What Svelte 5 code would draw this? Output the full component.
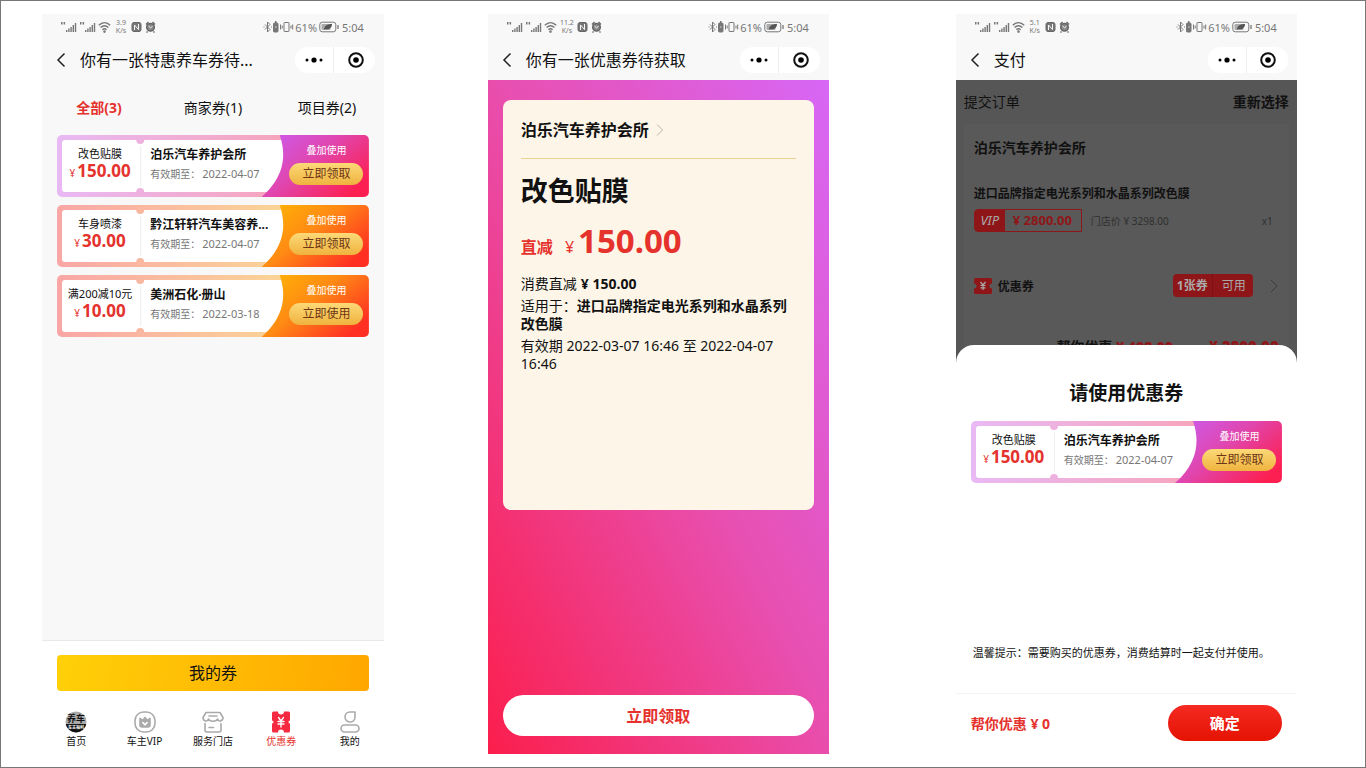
<script lang="ts">
	type Coupon = {
		id: number;
		label: string;
		amount: string;
		shop: string;
		expires: string;
		action: string;
		theme: 'pink' | 'orange';
	};

	const coupons: Coupon[] = [
		{ id: 1, label: '改色贴膜', amount: '150.00', shop: '泊乐汽车养护会所', expires: '2022-04-07', action: '立即领取', theme: 'pink' },
		{ id: 2, label: '车身喷漆', amount: '30.00', shop: '黔江轩轩汽车美容养...', expires: '2022-04-07', action: '立即领取', theme: 'orange' },
		{ id: 3, label: '满200减10元', amount: '10.00', shop: '美洲石化·册山', expires: '2022-03-18', action: '立即使用', theme: 'orange' }
	];

	const tabs = ['全部(3)', '商家券(1)', '项目券(2)'];
	const nav = [
		{ id: 'home', label: '首页' },
		{ id: 'vip', label: '车主VIP' },
		{ id: 'shop', label: '服务门店' },
		{ id: 'coupon', label: '优惠券' },
		{ id: 'me', label: '我的' }
	];

	let activeTab = $state('全部(3)');
	let activeNav = $state('coupon');
</script>

{#snippet topBar(title: string, speed: string)}
	<div class="status">
		<svg width="38" height="14" viewBox="0 0 38 14" fill="#777" aria-hidden="true">
			{#each [0, 19] as x}
				<path
					transform="translate({x} 0)"
					d="M1 2h1.500v2.600H1zM3.600 2h1.500v2.600H3.600zM6 10h1.400v2H6zM8.200 8.500h1.400V12H8.200zM10.400 7h1.400v5h-1.400zM12.600 5h1.400v7h-1.400zM14.800 3h1.400v9h-1.400z"
				/>
			{/each}
		</svg>
		<svg width="13" height="12" viewBox="0 0 13 12" fill="none" stroke="#777" stroke-width="1.400" aria-hidden="true">
			<path d="M.8 4.200c3.500-3.400 8-3.400 11.400 0M2.600 6.500c2.500-2.300 5.300-2.300 7.800 0M4.400 8.700c1.500-1.300 2.700-1.300 4.200 0" />
			<circle cx="6.500" cy="10.600" r=".6" />
		</svg>
		<span class="speed">{speed}<br />K/s</span>
		<svg width="26" height="12" viewBox="0 0 26 12" fill="none" stroke="#666" aria-hidden="true">
			<rect x="1" y="1.500" width="9" height="9" rx="2" fill="#777" />
			<path d="M3.500 9V4l4 4.500V3" stroke="#f7f7f7" />
			<circle cx="19.500" cy="6.300" r="3.800" fill="#888" stroke-width="1.500" />
			<path d="M15 3.500 17.500 1M24 3.500 21.500 1M16.500 10.500l-1 1M22.500 10.500l1 1" stroke-width="1.400" />
			<path d="M17.500 5l2 1.800 2-1.500" stroke="#f7f7f7" />
		</svg>
		<svg class="push" width="31" height="12" viewBox="0 0 31 12" fill="none" stroke="#777" aria-hidden="true">
			<path d="M2 3.500 7 8.500 4.500 11V1L7 3.500 2 8.500M.5 6h1M8 6h1" />
			<rect x="10.500" y="2" width="4.500" height="9" rx="1" fill="#777" />
			<path d="M12 1h1.500" stroke-width="2" />
			<path d="M12 6h1.500" stroke="#ddd" />
			<rect x="21" y="1.500" width="5" height="9" rx=".5" />
			<path d="M17.500 3.500v5M19.200 4.500v3M28 4.500v3M29.700 3.500v5" />
		</svg>
		<span>61%</span>
		<svg class="battery" width="20" height="12" viewBox="0 0 20 12" aria-hidden="true">
			<rect x=".8" y="1.200" width="16" height="9.600" rx="2.500" fill="none" stroke="#777" />
			<rect x="2.500" y="3" width="9" height="6" rx="1" fill="#aaa" />
			<path d="M5 9c0-4 3-6 8-6 0 4-3 6-7 5z" fill="#555" />
			<path d="M19 4v4" stroke="#777" stroke-width="1.300" />
		</svg>
		<span class="clock">5:04</span>
	</div>
	<header class="title-bar">
		<button class="back" type="button" aria-label="返回">
			<svg width="10" height="16" viewBox="0 0 10 16" fill="none" stroke="#222" stroke-width="1.500">
				<path d="M8.500 1.500 2 8l6.500 6.500" />
			</svg>
		</button>
		<h1>{title}</h1>
		<div class="capsule">
			<button type="button" aria-label="更多">
				<svg width="18" height="8" viewBox="0 0 18 8"><circle cx="2" cy="4" r="1.500" /><circle cx="9" cy="4" r="2.600" /><circle cx="16" cy="4" r="1.500" /></svg>
			</button>
			<button type="button" aria-label="关闭">
				<svg width="18" height="18" viewBox="0 0 18 18"><circle cx="9" cy="9" r="6.800" fill="none" stroke="#111" stroke-width="2" /><circle cx="9" cy="9" r="2.800" /></svg>
			</button>
		</div>
	</header>
{/snippet}

{#snippet ticket(c: Coupon, key: string)}
	<article class="ticket">
		<svg class="ticket-bg" viewBox="0 0 311 62" preserveAspectRatio="none" aria-hidden="true">
			<defs>
				<linearGradient id="edge-{key}">
					<stop offset="0" stop-color={c.theme === 'pink' ? '#e9b9f4' : '#f9a6a6'} />
					<stop offset="1" stop-color={c.theme === 'pink' ? '#f7a3b8' : '#fbd795'} />
				</linearGradient>
				<linearGradient id="side-{key}" x2="1" y2=".7">
					<stop offset="0" stop-color={c.theme === 'pink' ? '#ca5df2' : '#ffb802'} />
					<stop offset=".5" stop-color={c.theme === 'pink' ? '#e046af' : '#ff8a14'} />
					<stop offset="1" stop-color={c.theme === 'pink' ? '#fc2052' : '#ff3023'} />
				</linearGradient>
			</defs>
			<rect width="240" height="62" fill="url(#edge-{key})" />
			<path d="M8 5H79a4 4 0 0 0 8 0H240V57H87a4 4 0 0 0-8 0H8q-3 0-3-3V8q0-3 3-3z" fill="#fff" />
			<path d="M222 0C229 20 227 42 204 62H311V0z" fill="url(#side-{key})" />
			<path d="M83.500 11v40" stroke="#eee" />
		</svg>
		<div class="worth">
			<span>{c.label}</span>
			<strong><small>¥</small>{c.amount}</strong>
		</div>
		<div class="detail">
			<h3>{c.shop}</h3>
			<p>有效期至：<time>{c.expires}</time></p>
		</div>
		<div class="claim">
			<span>叠加使用</span>
			<button type="button">{c.action}</button>
		</div>
	</article>
{/snippet}

{#snippet navIcon(id: string)}
	<svg width="24" height="24" viewBox="0 0 24 24" fill="none" stroke="#aaa" stroke-width="1.600" stroke-linejoin="round" stroke-linecap="round" aria-hidden="true">
		{#if id === 'home'}
			<circle cx="12" cy="12" r="10.500" fill="#aaa" stroke="none" />
			<path d="M1.700 14h20.600a10.500 10.500 0 0 1-20.600 0z" fill="#111" stroke="none" />
			<text x="12" y="12" class="logo-text">养车</text>
			<text x="12" y="19" class="logo-small">车主福利</text>
		{:else if id === 'vip'}
			<rect x="2" y="2" width="20" height="20" rx="8.500" />
			<path d="M7 8.500l2.700 2L12 7.500l2.300 3 2.700-2V15q0 2-2 2H9q-2 0-2-2z" fill="#aaa" />
			<path d="M9.800 12.500 12 14.800l2.200-2.300" stroke="#fff" />
		{:else if id === 'shop'}
			<path d="M5 2.500h14l3 5c0 4-5 4.500-5.500 1.500C15.500 12 8.500 12 7.500 9 7 12 2 11.500 2 7.500zM8 6h8M4 13.500V20q0 2 2 2h12q2 0 2-2v-6.500M8 17.500h4.500" />
		{:else if id === 'coupon'}
			<path d="M3 3q0-1.500 1.500-1.500H9a3 3 0 0 0 6 0h4.500Q21 1.500 21 3v7.500a1.500 1.500 0 0 0 0 3V21q0 1.500-1.500 1.500H15a3 3 0 0 0-6 0H4.500Q3 22.500 3 21v-7.500a1.500 1.500 0 0 0 0-3z" fill="#f5293f" stroke="none" />
			<path d="M9.500 7.500 12 11l2.500-3.500M9 11.500h6M9 14h6M12 11v6" stroke="#fff" stroke-width="1.400" />
		{:else}
			<path d="M12 2h5v5.500a5 5 0 1 1-5-5.500z" />
			<rect x="3" y="15" width="18" height="7" rx="3.500" />
		{/if}
	</svg>
{/snippet}

<main class="board">
	<section class="phone">
		{@render topBar('你有一张特惠养车券待...', '3.9')}
		<div class="tabs">
			{#each tabs as tab (tab)}
				<button type="button" class:active={activeTab === tab} onclick={() => (activeTab = tab)}>{tab}</button>
			{/each}
		</div>
		<div class="coupon-list">
			{#each coupons as coupon (coupon.id)}
				{@render ticket(coupon, `list-${coupon.id}`)}
			{/each}
		</div>
		<footer class="list-footer">
			<button class="mine" type="button">我的券</button>
			<nav>
				{#each nav as item (item.id)}
					<button type="button" class:active={activeNav === item.id} onclick={() => (activeNav = item.id)}>
						{@render navIcon(item.id)}
						<span>{item.label}</span>
					</button>
				{/each}
			</nav>
		</footer>
	</section>

	<section class="phone">
		{@render topBar('你有一张优惠券待获取', '11.2')}
		<div class="claim-page">
			<article class="voucher">
				<a class="shop-link" href="#shop">
					泊乐汽车养护会所
					<svg width="8" height="14" viewBox="0 0 8 14" fill="none" stroke="#bbb5a8" aria-hidden="true"><path d="M1 1.500 6.500 7 1 12.500" /></svg>
				</a>
				<h2>改色贴膜</h2>
				<div class="price"><b>直减</b><span>¥</span><strong>150.00</strong></div>
				<p>消费直减<b class="amount">¥ 150.00</b></p>
				<p>适用于：<b>进口品牌指定电光系列和水晶系列改色膜</b></p>
				<p>有效期 2022-03-07 16:46 至 2022-04-07 16:46</p>
			</article>
			<button class="get" type="button">立即领取</button>
		</div>
	</section>

	<section class="phone">
		{@render topBar('支付', '5.1')}
		<div class="pay-page">
			<div class="order-head"><span>提交订单</span><button type="button">重新选择</button></div>
			<div class="order">
				<h2>泊乐汽车养护会所</h2>
				<h3>进口品牌指定电光系列和水晶系列改色膜</h3>
				<div class="item-price">
					<span class="vip"><i>VIP</i><b>¥ 2800.00</b></span>
					<span class="retail">门店价 ¥ 3298.00</span>
					<span class="count">x1</span>
				</div>
				<div class="coupon-row">
					<svg width="18" height="16" viewBox="0 0 18 16" aria-hidden="true">
						<path d="M1.500 0h15Q18 0 18 1.500v4a2.500 2.500 0 0 0 0 5v4q0 1.500-1.500 1.500h-15Q0 16 0 14.500v-4a2.500 2.500 0 0 0 0-5v-4Q0 0 1.500 0z" fill="#8f1618" />
						<path d="M6.500 4 9 7l2.500-3M6.500 7.500h5M6.500 9.800h5M9 7v5" fill="none" stroke="#aaa" stroke-width="1.200" />
					</svg>
					<b>优惠券</b>
					<span class="usable"><strong>1张券</strong><span>可用</span></span>
					<svg width="9" height="14" viewBox="0 0 9 14" fill="none" stroke="#3c3c3c" aria-hidden="true"><path d="M1 1l6 6-6 6" /></svg>
				</div>
				<div class="totals"><span>帮你优惠 <b>¥ 498.00</b></span><b class="sum">¥ 2800.00</b></div>
			</div>
			<div class="sheet" role="dialog" aria-label="请使用优惠券">
				<h2>请使用优惠券</h2>
				{@render ticket(coupons[0], 'sheet')}
				<p class="tip">温馨提示：需要购买的优惠券，消费结算时一起支付并使用。</p>
				<footer>
					<b>帮你优惠 ¥ 0</b>
					<button type="button">确定</button>
				</footer>
			</div>
		</div>
	</section>
</main>

<style>
	:global(body) {
		background: #fff;
	}

	.board {
		box-sizing: border-box;
		min-height: 100vh;
		display: grid;
		grid-template-columns: 342fr 104fr 341fr 127fr 341fr;
		padding: 13px 5% 13px 3%;
		border: 1px solid #777;
		font-family: 'Noto Sans', 'Noto Sans CJK SC', sans-serif;
		color: #111;
	}

	.phone {
		display: flex;
		flex-direction: column;
		min-width: 0;
		background: #f8f8f8;
	}

	.phone:nth-child(2) {
		grid-column: 3;
	}

	.phone:nth-child(3) {
		grid-column: 5;
	}

	h1,
	h2,
	h3,
	p {
		margin: 0;
	}

	button {
		padding: 0;
		border: 0;
		background: none;
		font: inherit;
		color: inherit;
		cursor: pointer;
	}

	svg {
		display: block;
		flex: none;
	}

	.status {
		display: flex;
		align-items: center;
		height: 26px;
		padding: 0 20px 0 18px;
		font-size: 11px;
		color: #777;
	}

	.speed {
		width: 20px;
		font-size: 7px;
		line-height: 8px;
		text-align: center;
	}

	.push {
		margin: 0 1px 0 auto;
	}

	.battery {
		margin-left: 2px;
	}

	.clock {
		margin-left: 3px;
	}

	.title-bar {
		display: flex;
		align-items: center;
		height: 40px;
		padding: 0 9px 0 14px;
	}

	.back {
		width: 24px;
	}

	h1 {
		font-size: 16px;
		line-height: 24px;
		font-weight: 400;
		white-space: nowrap;
	}

	.capsule {
		display: flex;
		width: 80px;
		height: 26px;
		margin-left: auto;
		border-radius: 13px;
		background: #fff;
	}

	.capsule button {
		flex: 1;
		display: grid;
		place-items: center;
	}

	.capsule button + button {
		padding-left: 2px;
		border-left: 1px solid #eee;
	}

	.tabs {
		display: grid;
		grid-template-columns: repeat(3, 1fr);
		height: 53px;
		margin-bottom: 2px;
		font-size: 14px;
	}

	.tabs .active {
		font-weight: 700;
		color: #e5322d;
	}

	.coupon-list {
		flex: 1;
		display: flex;
		flex-direction: column;
		gap: 8px;
		padding: 0 15px;
	}

	.ticket {
		display: grid;
		grid-template-columns: 27% 41% 32%;
		height: 62px;
		border-radius: 5px;
		overflow: hidden;
	}

	.ticket-bg {
		grid-area: 1 / 1 / 2 / 4;
		width: 100%;
		height: 62px;
	}

	.worth,
	.detail,
	.claim {
		grid-row: 1;
		display: flex;
		flex-direction: column;
		z-index: 1;
	}

	.worth {
		grid-column: 1;
		align-items: center;
		padding: 11px 0 0 2px;
		font-size: 11px;
		line-height: 16px;
	}

	.worth strong {
		font-size: 17px;
		line-height: 18px;
		color: #e5322d;
	}

	.worth small {
		margin-right: 2px;
		font-size: 10px;
		font-weight: 400;
	}

	.detail {
		grid-column: 2;
		padding: 10px 0 0 9px;
		white-space: nowrap;
	}

	.detail h3 {
		font-size: 12px;
		line-height: 20px;
	}

	.detail p {
		font-size: 10px;
		line-height: 18px;
		color: #777;
	}

	.detail time {
		margin-left: 2px;
		font-size: 11px;
	}

	.claim {
		grid-column: 3;
		align-items: center;
		padding: 7px 0 0 15px;
		font-size: 10px;
		line-height: 16px;
		color: #fff;
	}

	.claim button {
		width: 74px;
		height: 22px;
		margin-top: 5px;
		border-radius: 11px;
		background: linear-gradient(#fcd978, #efb33e);
		font-size: 12px;
		color: #6d3515;
	}

	.list-footer {
		padding: 14px 15px 6px;
		border-top: 1px solid #e8e8e8;
		background: #fff;
	}

	.mine {
		width: 100%;
		height: 36px;
		padding-bottom: 2px;
		border-radius: 4px;
		background: linear-gradient(100deg, #ffd008, #ffa700);
		font-size: 16px;
	}

	nav {
		display: grid;
		grid-template-columns: repeat(5, 1fr);
		margin: 19px -15px 0;
	}

	nav button {
		display: flex;
		flex-direction: column;
		align-items: center;
		font-size: 10px;
		line-height: 14px;
	}

	nav .active {
		color: #e5322d;
	}

	.logo-text,
	.logo-small {
		font-size: 9px;
		font-weight: 700;
		text-anchor: middle;
		fill: #111;
		stroke: none;
	}

	.logo-small {
		font-size: 4px;
		fill: #fff;
	}

	.claim-page {
		flex: 1;
		display: flex;
		flex-direction: column;
		justify-content: space-between;
		padding: 20px 15px 18px;
		background: linear-gradient(to top right, #fb1e4c, #e84fb0 52%, #d767f6);
	}

	.voucher {
		min-height: 374px;
		padding: 18px;
		border-radius: 8px;
		background: #fdf6e8;
	}

	.shop-link {
		display: flex;
		align-items: center;
		gap: 7px;
		padding-bottom: 16px;
		border-bottom: 1px solid #e9d294;
		font-size: 16px;
		line-height: 24px;
		font-weight: 700;
		color: inherit;
		text-decoration: none;
	}

	.voucher h2 {
		margin-top: 14px;
		font-size: 27px;
		line-height: 36px;
	}

	.price {
		display: flex;
		align-items: baseline;
		margin: 9px 0 5px;
		font-size: 16px;
		line-height: 46px;
		color: #e5322d;
	}

	.price span {
		margin: 0 4px 0 12px;
	}

	.price strong {
		font-size: 33px;
	}

	.voucher p {
		margin-bottom: 4px;
		font-size: 14px;
		line-height: 18px;
	}

	.amount {
		margin-left: 4px;
	}

	.get {
		height: 41px;
		padding-bottom: 2px;
		border-radius: 21px;
		background: #fff;
		font-size: 16px;
		font-weight: 700;
		color: #e5322d;
	}

	.pay-page {
		flex: 1;
		position: relative;
		background: #565656;
	}

	.order-head {
		display: flex;
		justify-content: space-between;
		padding: 12px 8px;
		font-size: 14px;
		line-height: 20px;
	}

	.order-head button {
		font-weight: 700;
	}

	.order {
		margin: 0 8px;
		padding: 14px 10px 0;
		background: #595959;
	}

	.order h2 {
		font-size: 14px;
		line-height: 20px;
	}

	.order h3 {
		margin-top: 27px;
		font-size: 12px;
		line-height: 18px;
	}

	.item-price {
		display: flex;
		align-items: center;
		margin-top: 6px;
		font-size: 10px;
		color: #303030;
	}

	.vip {
		display: flex;
		border: 1px solid #8f1618;
		border-radius: 4px 0 0 4px;
		font-size: 13px;
		line-height: 21px;
		color: #8f1618;
	}

	.vip i {
		width: 30px;
		background: #8f1618;
		text-align: center;
		color: #aaa;
	}

	.vip b {
		padding: 0 9px 0 8px;
	}

	.retail {
		margin-left: 9px;
	}

	.count {
		margin: 0 6px 0 auto;
	}

	.coupon-row {
		display: flex;
		align-items: center;
		margin-top: 42px;
		font-size: 12px;
	}

	.coupon-row b {
		margin-left: 6px;
	}

	.usable {
		display: flex;
		margin: 0 17px 0 auto;
		border-radius: 4px;
		background: #8f1618;
		line-height: 23px;
		color: #aaa;
	}

	.usable strong {
		padding: 0 4px;
	}

	.usable span {
		padding: 0 7px 0 9px;
		border-left: 1px dotted #6b1012;
	}

	.totals {
		display: flex;
		align-items: baseline;
		justify-content: flex-end;
		gap: 36px;
		margin-top: 39px;
		font-size: 14px;
		font-weight: 700;
		line-height: 20px;
	}

	.totals b {
		color: #8f1618;
	}

	.totals .sum {
		font-size: 15px;
	}

	.sheet {
		position: absolute;
		inset: auto 0 0;
		display: flex;
		flex-direction: column;
		min-height: 409px;
		border-radius: 18px 18px 0 0;
		background: #fff;
	}

	.sheet h2 {
		margin: 34px 0 14px;
		font-size: 19px;
		line-height: 28px;
		text-align: center;
	}

	.sheet .ticket {
		margin: 0 15px;
	}

	.tip {
		margin: auto 0 30px;
		padding-left: 17px;
		font-size: 11px;
		line-height: 20px;
		white-space: nowrap;
	}

	.sheet footer {
		display: flex;
		align-items: center;
		justify-content: space-between;
		height: 58px;
		padding: 0 15px 2px;
		border-top: 1px solid #f4f4f4;
		font-size: 14px;
		color: #e5322d;
	}

	.sheet footer button {
		width: 114px;
		height: 36px;
		padding-bottom: 2px;
		border-radius: 18px;
		background: linear-gradient(#f52a22, #e41303);
		font-size: 15px;
		font-weight: 700;
		color: #fff;
	}
</style>
